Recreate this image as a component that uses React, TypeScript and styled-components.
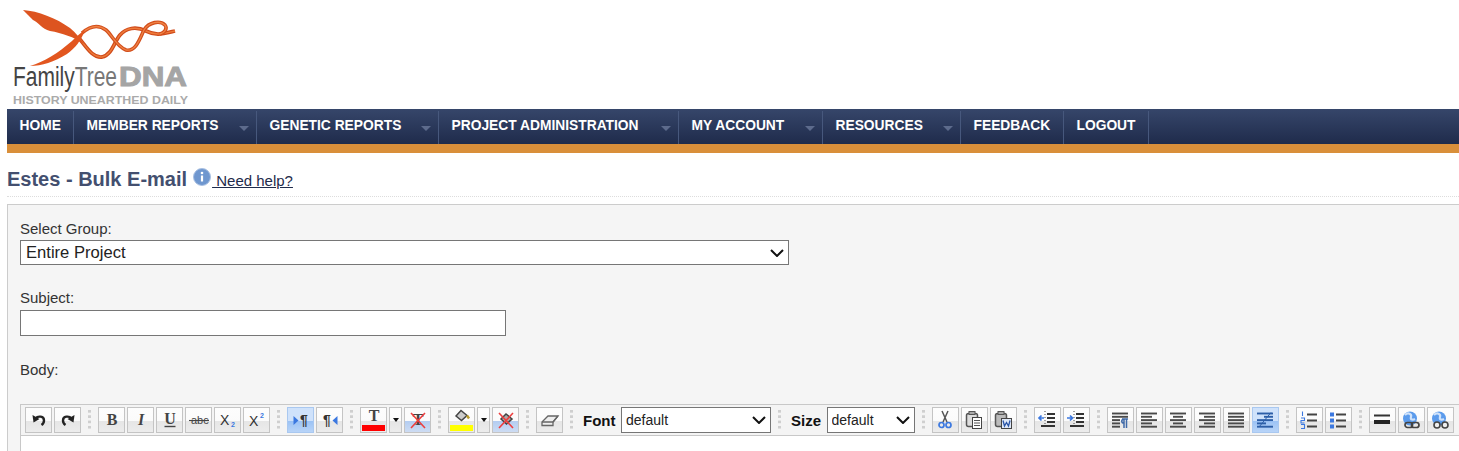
import React from "react";
import styled, { createGlobalStyle } from "styled-components";

const GlobalStyle = createGlobalStyle`
  html, body {
    margin: 0;
    height: 100%;
    overflow: hidden;
    background: #fff;
    font-family: "Liberation Sans", Arial, sans-serif;
  }
`;

const chevron = (w: number, h: number) =>
  `url("data:image/svg+xml,%3Csvg xmlns='http://www.w3.org/2000/svg' width='${w}' height='${h}' viewBox='0 0 14 8'%3E%3Cpath d='M1 1L7 7L13 1' fill='none' stroke='%23111' stroke-width='2'/%3E%3C/svg%3E")`;

const Page = styled.div`
  width: 1459px;
  height: 451px;
  overflow: hidden;
  padding-left: 7px;
  box-sizing: border-box;
`;

const LogoBox = styled.svg`
  display: block;
  width: 190px;
  height: 109px;
  margin-left: -7px;
`;

const Nav = styled.nav`
  display: flex;
  height: 35px;
  background: linear-gradient(#36466a, #1f2b4b);
  border-bottom: 9px solid #d98f3a;
`;

const NavItem = styled.a<{ $w: number }>`
  width: ${({ $w }) => $w}px;
  box-sizing: border-box;
  display: block;
  position: relative;
  height: 33px;
  margin-top: 2px;
  padding-left: 12.5px;
  line-height: 29px;
  font-size: 13.8px;
  font-weight: bold;
  color: #fff;
  border-right: 1px solid #47587d;
  white-space: nowrap;
`;

const NavArrow = styled.span`
  position: absolute;
  right: 7px;
  top: 15px;
  width: 0;
  height: 0;
  border-left: 5px solid transparent;
  border-right: 5px solid transparent;
  border-top: 5px solid #5d6b8c;
`;

const TitleRow = styled.div`
  display: flex;
  align-items: flex-start;
  height: 44px;
  padding-top: 14px;
  box-sizing: border-box;
  border-bottom: 1px dotted #ddd;
`;

const Title = styled.h1`
  margin: 0;
  font-size: 20px;
  line-height: 24px;
  font-weight: bold;
  color: #434f6f;
`;

const InfoIcon = styled.svg`
  width: 18px;
  height: 18px;
  margin: 1px 0 0 6px;
`;

const Help = styled.a`
  margin: 5px 0 0 1px;
  font-size: 15px;
  line-height: 18px;
  color: #1f2b4b;
  text-decoration: underline;
  white-space: pre;
`;

const Panel = styled.div`
  margin-top: 7px;
  width: 1500px;
  height: 300px;
  padding: 15px 0 0 12px;
  box-sizing: border-box;
  background: #f5f5f5;
  border: 1px solid #ccc;
  border-right: none;
  border-bottom: none;
`;

const Label = styled.label`
  display: block;
  font-size: 15px;
  line-height: 18px;
  color: #333;
`;

const GroupSelect = styled.select`
  display: block;
  appearance: none;
  width: 769px;
  height: 25px;
  margin: 2px 0 24px;
  font-family: "Liberation Sans", Arial, sans-serif;
  font-size: 16.6px;
  color: #222;
  border: 1px solid #767676;
  border-radius: 0;
  padding: 0 0 0 5px;
  background: #fff ${chevron(14, 8)} no-repeat right 4px center;
`;

const SubjectInput = styled.input`
  display: block;
  width: 486px;
  height: 26px;
  margin: 3px 0 25px;
  box-sizing: border-box;
  background: #fff;
  border: 1px solid #767676;
`;

const Toolbar = styled.div`
  display: flex;
  align-items: center;
  height: 32px;
  width: 1480px;
  margin-top: 25px;
  padding-left: 4px;
  box-sizing: border-box;
  background: #f4f4f4;
  border: 1px solid #c8c8c8;
`;

const Grip = styled.span`
  flex: none;
  width: 3px;
  height: 21px;
  margin: 0 7px;
  background: linear-gradient(#cfcfcf 0, #cfcfcf 3px, transparent 3px) 0 0 / 3px 5.3px repeat-y;
`;

const Group = styled.div`
  display: flex;
  gap: 2px;
  flex: none;
  height: 26px;
`;

const lower = (tone?: string) => {
  if (tone === "active") return "linear-gradient(#cfe2fb 0, #cfe2fb 55%, #9cc3f5 56%, #b8d4f8 100%)";
  if (tone === "clear") return "linear-gradient(#fbfbfb 0, #fbfbfb 55%, #b4cdf1 56%, #cddcf3 100%)";
  return "linear-gradient(#fdfdfd 0, #fbfbfb 55%, #e6e6e6 56%, #ececec 100%)";
};

const Btn = styled.span<{ $tone?: string; $narrow?: boolean }>`
  display: flex;
  align-items: center;
  justify-content: center;
  box-sizing: border-box;
  flex: none;
  width: ${({ $narrow }) => ($narrow ? 13 : 27)}px;
  height: 26px;
  border: 1px solid ${({ $tone }) => ($tone === "active" ? "#a9c8f0" : "#c4c4c4")};
  background: ${({ $tone }) => lower($tone)};
`;

const ToolLabel = styled.span`
  flex: none;
  font-size: 15px;
  font-weight: bold;
  color: #111;
  margin: 0 5.5px 0 3px;
`;

const ToolSelect = styled.select<{ $w: number }>`
  appearance: none;
  flex: none;
  width: ${({ $w }) => $w}px;
  height: 26px;
  font-family: "Liberation Sans", Arial, sans-serif;
  font-size: 14px;
  color: #222;
  border: 1px solid #767676;
  border-radius: 0;
  padding: 0 0 0 4px;
  background: #fff ${chevron(14, 8)} no-repeat right 4px center;
`;

const EditorBody = styled.div`
  width: 1480px;
  height: 40px;
  background: #fff;
  border-left: 1px solid #c8c8c8;
  box-sizing: border-box;
`;

const Ico = styled.svg`
  width: 18px;
  height: 18px;
  display: block;
  fill: none;
  overflow: visible;
`;

const Swatch = styled.span<{ $c: string }>`
  position: absolute;
  left: 1px;
  right: 1px;
  bottom: 1px;
  height: 6px;
  background: ${({ $c }) => $c};
`;

const SwatchBtn = styled(Btn)`
  position: relative;
  align-items: flex-start;
`;

const ArrowDown = styled.span`
  width: 0;
  height: 0;
  border-left: 3.5px solid transparent;
  border-right: 3.5px solid transparent;
  border-top: 4px solid #111;
`;

const DK = "#444";
const BL = "#3b78e0";

const Lines = ({ rows, color = "#4a4a4a" }: { rows: [number, number][]; color?: string }) => (
  <>
    {rows.map(([a, b], i) => (
      <path key={i} d={`M${a} ${2.5 + i * 3.3}H${b}`} stroke={color} strokeWidth="1.9" />
    ))}
  </>
);

const Cross = () => <path d="M2 2L16 17M16 2L2 17" stroke="#ee3f3f" strokeWidth="1.6" />;

const glyph = (body: React.ReactNode) => <Ico viewBox="0 0 18 18">{body}</Ico>;

const serif = (ch: string, extra: React.SVGProps<SVGTextElement> = {}) => (
  <text x="9" y="14" textAnchor="middle" fontFamily="Liberation Serif" fontWeight="bold" fontSize="16" fill={DK} {...extra}>
    {ch}
  </text>
);

const sans = (ch: string, x: number, y: number, size: number, fill: string, weight = "normal") => (
  <text x={x} y={y} fontFamily="Liberation Sans" fontSize={size} fontWeight={weight} fill={fill}>
    {ch}
  </text>
);

const pilcrow = (x: number) => (
  <text x={x} y="14" fontFamily="Liberation Sans" fontWeight="bold" fontSize="14" fill="#333">
    ¶
  </text>
);

const globe = (
  <>
    <circle cx="8" cy="7.5" r="7" fill="#5b9bec" />
    <path d="M3 4C6 1 10 3 9 6C8 9 11 9 13 8" stroke="#cfe2fa" strokeWidth="2.2" />
  </>
);

const icons: Record<string, React.ReactNode> = {
  undo: glyph(<><path d="M5.5 7.5C8 4.5 14 5 14 9.5C14 11.5 13 13 11.5 14" stroke="#222" strokeWidth="2.4" /><path d="M2.5 4L3.5 11.5L9.5 8Z" fill="#222" /></>),
  redo: glyph(<><path d="M12.5 7.5C10 4.5 4 5 4 9.5C4 11.5 5 13 6.5 14" stroke="#222" strokeWidth="2.4" /><path d="M15.5 4L14.5 11.5L8.5 8Z" fill="#222" /></>),
  bold: glyph(serif("B")),
  italic: glyph(serif("I", { fontStyle: "italic" })),
  underline: glyph(<>{serif("U", { y: 13 })}<path d="M3.5 15.5H14.5" stroke={DK} strokeWidth="1.4" /></>),
  strike: glyph(<>{sans("abc", 1, 13, 11, DK)}<path d="M-1 9.5H19" stroke={DK} strokeWidth="1.1" /></>),
  sub: glyph(<>{sans("X", 1, 14, 14, "#333")}{sans("2", 12, 16, 7, BL, "bold")}</>),
  sup: glyph(<>{sans("X", 1, 15, 14, "#333")}{sans("2", 12, 7, 7, BL, "bold")}</>),
  ltr: glyph(<><path d="M1.5 5L6.5 9.5L1.5 14Z" fill={BL} />{pilcrow(8)}</>),
  rtl: glyph(<><path d="M16.5 5L11.5 9.5L16.5 14Z" fill={BL} />{pilcrow(2)}</>),
  color: glyph(serif("T", { y: 13, fontSize: 16 })),
  clearColor: glyph(<>{serif("T", { fontSize: 16 })}<Cross /></>),
  fill: glyph(<><path d="M3 8L8 2.5L14 7.5L8.5 12.5Z" stroke="#444" strokeWidth="1.5" fill="#ccc" /><path d="M14 7.5L16 10.5" stroke="#b89a2a" strokeWidth="2.4" /></>),
  clearFill: glyph(<><path d="M4 8L9 3L15 8L9.5 13Z" stroke="#444" strokeWidth="1.5" fill="#aaa" /><Cross /></>),
  eraser: glyph(<><path d="M1 11L7 5H17L12 11V14.5H1Z" stroke="#666" strokeWidth="1.3" fill="#eee" /><path d="M1 11H12L17 5" stroke="#666" strokeWidth="1.3" /></>),
  cut: glyph(<><path d="M6 0L11 11M12 0L7 11" stroke="#555" strokeWidth="1.5" /><circle cx="5.5" cy="14" r="2.5" stroke={BL} strokeWidth="1.7" /><circle cx="12.5" cy="14" r="2.5" stroke={BL} strokeWidth="1.7" /></>),
  copy: glyph(<><rect x="1.5" y="2.5" width="11" height="13" rx="2" stroke="#555" strokeWidth="1.5" fill="#ddd" /><rect x="4" y="0.5" width="6" height="3" fill="#aaa" stroke="#555" /><rect x="7.5" y="6.5" width="9" height="11" fill="#fff" stroke="#444" /><path d="M9 9.5H15M9 12H15M9 14.5H15" stroke="#555" /></>),
  word: glyph(<><rect x="1.5" y="2.5" width="11" height="13" rx="2" stroke="#555" strokeWidth="1.5" fill="#bbb" /><rect x="4" y="0.5" width="6" height="3" fill="#aaa" stroke="#555" /><rect x="7.5" y="7.5" width="10" height="10" fill="#dfe8f7" stroke="#444" /><path d="M9 9.5L10.5 15L12.5 11.5L14.5 15L16 9.5" stroke="#2a55a8" strokeWidth="1.3" /></>),
  outdent: glyph(<><path d="M7 0V18" stroke="#444" strokeDasharray="1 2" /><path d="M9 3H17M9 7H17M9 11H17M3 15H17" stroke="#333" strokeWidth="1.8" /><path d="M1 7H6M3.5 4.5L1 7L3.5 9.5" stroke={BL} strokeWidth="1.7" /></>),
  indent: glyph(<><path d="M7 0V18" stroke="#444" strokeDasharray="1 2" /><path d="M9 3H17M9 7H17M9 11H17M3 15H17" stroke="#333" strokeWidth="1.8" /><path d="M0 7H5.5M3 4.5L5.5 7L3 9.5" stroke={BL} strokeWidth="1.7" /></>),
  pilcrow: glyph(<><Lines rows={[[1, 17], [1, 17], [1, 9], [1, 9], [1, 9]]} /><path d="M11 8H17M13 8V17M15.5 8V17M13 8C10 8.5 10 12 13 12" stroke="#3f6aa8" strokeWidth="1.5" /></>),
  left: glyph(<Lines rows={[[1, 17], [1, 12], [1, 17], [1, 12], [1, 17]]} />),
  center: glyph(<Lines rows={[[1, 17], [4, 14], [1, 17], [4, 14], [1, 17]]} />),
  right: glyph(<Lines rows={[[1, 17], [6, 17], [1, 17], [6, 17], [1, 17]]} />),
  justify: glyph(<Lines rows={[[1, 17], [1, 17], [1, 17], [1, 17], [1, 17]]} />),
  wrap: glyph(<><Lines color="#2d5fa8" rows={[[1, 17], [8, 17], [1, 17], [1, 10], [1, 17]]} /><path d="M3 16L15 1.5" stroke="#2d5fa8" strokeWidth="1" /></>),
  ol: glyph(<><path d="M7 3.5H17M7 9.5H17M7 15.5H17" stroke="#444" strokeWidth="1.8" /><path d="M2.5 0.5V5M1 7H4.5V9.5H1V12H4.5M1 13.5H4.5V17.5H1" stroke={BL} strokeWidth="1.1" /></>),
  ul: glyph(<><path d="M7 3.5H17M7 9.5H17M7 15.5H17" stroke="#444" strokeWidth="1.8" /><path d="M1 1.5H5V5.5H1ZM1 7.5H5V11.5H1ZM1 13.5H5V17.5H1Z" fill={BL} /></>),
  hr: glyph(<><path d="M1 4.5H17" stroke="#333" strokeWidth="2" /><path d="M1 11H17" stroke="#222" strokeWidth="4" /></>),
  link: glyph(<>{globe}<rect x="3" y="11.5" width="7.5" height="5" rx="2.5" stroke="#444" strokeWidth="1.7" /><rect x="9.5" y="11.5" width="7.5" height="5" rx="2.5" stroke="#444" strokeWidth="1.7" /></>),
  anchor: glyph(<>{globe}<circle cx="6" cy="14" r="3" fill="#eee" stroke="#444" strokeWidth="1.6" /><circle cx="14" cy="14" r="3" fill="#eee" stroke="#444" strokeWidth="1.6" /></>),
};

const Tool = ({ name, tone }: { name: string; tone?: string }) => <Btn $tone={tone}>{icons[name]}</Btn>;

const navLinks: [string, number, boolean][] = [
  ["HOME", 67, false],
  ["MEMBER REPORTS", 183, true],
  ["GENETIC REPORTS", 182, true],
  ["PROJECT ADMINISTRATION", 240, true],
  ["MY ACCOUNT", 144, true],
  ["RESOURCES", 138, true],
  ["FEEDBACK", 103, false],
  ["LOGOUT", 85, false],
];

const names = (s: string) => s.split(" ").map((n) => <Tool key={n} name={n} />);

export default function App() {
  return (
    <Page>
      <GlobalStyle />
      <LogoBox viewBox="0 0 190 109">
        <path d="M78 37C86 46 92 58 102 57C112 55 114 42 120 35C126 28 136 26 146 31C156 36 162 34 175 31" fill="none" stroke="#cf4a1a" strokeWidth="3.8" />
        <path d="M78 37C86 46 92 58 102 57C112 55 114 42 120 35C126 28 136 26 146 31C156 36 162 34 175 31" fill="none" stroke="#ee7a3a" strokeWidth="1.4" />
        <path d="M82 33C90 26 98 24 106 30C112 35 116 46 126 50C136 52 140 38 144 30C149 22 160 20 165 25C168 29 164 33 160 34" fill="none" stroke="#d24e1c" strokeWidth="3.6" />
        <path d="M82 33C90 26 98 24 106 30C112 35 116 46 126 50C136 52 140 38 144 30C149 22 160 20 165 25C168 29 164 33 160 34" fill="none" stroke="#f08244" strokeWidth="1.3" />
        <path d="M23 10C38 11 56 18 70 28C76 33 80 38 84 44C74 37 62 33 50 31C42 29 38 22 33 20Z" fill="#dd5420" />
        <path d="M30 66C44 62 58 53 72 41C76 37 80 33 85 30C81 41 75 48 67 54C54 62 42 66 30 66Z" fill="#e2561f" />
        <text x="13" y="86" fontFamily="Liberation Sans" fontSize="27" fill="#444" textLength="104" lengthAdjust="spacingAndGlyphs">
          Family<tspan fill="#777">Tree</tspan>
        </text>
        <text x="119" y="86" fontFamily="Liberation Sans" fontWeight="bold" fontSize="27" fill="#a5a5a5" stroke="#a5a5a5" strokeWidth="1" textLength="68" lengthAdjust="spacingAndGlyphs">DNA</text>
        <text x="13" y="103.5" fontFamily="Liberation Sans" fontWeight="bold" fontSize="11.5" fill="#aaa" textLength="175" lengthAdjust="spacingAndGlyphs">HISTORY UNEARTHED DAILY</text>
      </LogoBox>
      <Nav>
        {navLinks.map(([label, w, arrow]) => (
          <NavItem key={label} $w={w}>
            {label}
            {arrow && <NavArrow />}
          </NavItem>
        ))}
      </Nav>
      <TitleRow>
        <Title>Estes - Bulk E-mail</Title>
        <InfoIcon viewBox="0 0 18 18">
          <circle cx="9" cy="9" r="8.5" fill="#6f97cf" stroke="#a9c0e2" />
          <circle cx="9" cy="5" r="1.3" fill="#fff" />
          <path d="M9 7.5V13.5" stroke="#fff" strokeWidth="2.2" />
        </InfoIcon>
        <Help> Need help?</Help>
      </TitleRow>
      <Panel>
        <Label>Select Group:</Label>
        <GroupSelect defaultValue="Entire Project">
          <option>Entire Project</option>
        </GroupSelect>
        <Label>Subject:</Label>
        <SubjectInput />
        <Label>Body:</Label>
        <Toolbar>
          <Group>{names("undo redo")}</Group>
          <Grip />
          <Group>{names("bold italic underline strike sub sup")}</Group>
          <Grip />
          <Group>
            <Tool name="ltr" tone="active" />
            <Tool name="rtl" />
          </Group>
          <Grip />
          <Group>
            <SwatchBtn>{icons.color}<Swatch $c="#ff0000" /></SwatchBtn>
            <Btn $narrow><ArrowDown /></Btn>
            <Tool name="clearColor" tone="clear" />
          </Group>
          <Grip />
          <Group>
            <SwatchBtn>{icons.fill}<Swatch $c="#ffff00" /></SwatchBtn>
            <Btn $narrow><ArrowDown /></Btn>
            <Tool name="clearFill" tone="clear" />
          </Group>
          <Grip />
          <Group>{names("eraser")}</Group>
          <Grip />
          <ToolLabel>Font</ToolLabel>
          <ToolSelect $w={150} defaultValue="default"><option>default</option></ToolSelect>
          <Grip />
          <ToolLabel>Size</ToolLabel>
          <ToolSelect $w={88} defaultValue="default"><option>default</option></ToolSelect>
          <Grip />
          <Group>{names("cut copy word")}</Group>
          <Grip />
          <Group>{names("outdent indent")}</Group>
          <Grip />
          <Group>
            {names("pilcrow left center right justify")}
            <Tool name="wrap" tone="active" />
          </Group>
          <Grip />
          <Group>{names("ol ul")}</Group>
          <Grip />
          <Group>{names("hr link anchor")}</Group>
        </Toolbar>
        <EditorBody />
      </Panel>
    </Page>
  );
}
